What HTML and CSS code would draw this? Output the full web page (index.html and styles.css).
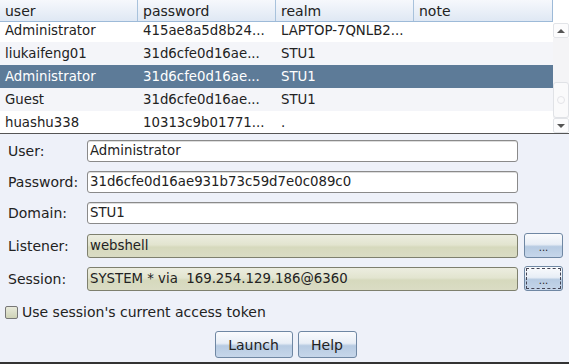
FILE: index.html
```html
<!DOCTYPE html>
<html lang="en">
<head>
  <meta charset="UTF-8" />
  <title>Make Token</title>
  <link rel="stylesheet" href="styles.css">
</head>
<body>
  <div class="table-wrap">
    <div class="table">
      <div class="thead">
        <div class="th">user</div>
        <div class="th">password</div>
        <div class="th">realm</div>
        <div class="th">note</div>
      </div>
      <div class="tbody">
        <div class="rows">
          <div class="tr"><div class="td">Administrator</div><div class="td">415ae8a5d8b24...</div><div class="td">LAPTOP-7QNLB2...</div><div class="td"></div></div>
          <div class="tr alt"><div class="td">liukaifeng01</div><div class="td">31d6cfe0d16ae...</div><div class="td">STU1</div><div class="td"></div></div>
          <div class="tr sel"><div class="td">Administrator</div><div class="td">31d6cfe0d16ae...</div><div class="td">STU1</div><div class="td"></div></div>
          <div class="tr alt"><div class="td">Guest</div><div class="td">31d6cfe0d16ae...</div><div class="td">STU1</div><div class="td"></div></div>
          <div class="tr"><div class="td">huashu338</div><div class="td">10313c9b01771...</div><div class="td">.</div><div class="td"></div></div>
        </div>
      </div>
    </div>
    <div class="scrollbar">
      <div class="sb-btn"><span class="arrow up"></span></div>
      <div class="sb-track"><div class="sb-thumb"><span class="grip"></span></div></div>
      <div class="sb-btn"><span class="arrow down"></span></div>
    </div>
  </div>

  <div class="form">
    <div class="row">
      <label>User:</label>
      <div class="field">Administrator</div>
    </div>
    <div class="row">
      <label>Password:</label>
      <div class="field">31d6cfe0d16ae931b73c59d7e0c089c0</div>
    </div>
    <div class="row">
      <label>Domain:</label>
      <div class="field">STU1</div>
    </div>
    <div class="row tall">
      <label>Listener:</label>
      <div class="field ro">webshell</div>
      <button class="btn dots">...</button>
    </div>
    <div class="row tall">
      <label>Session:</label>
      <div class="field ro">SYSTEM * via&nbsp; 169.254.129.186@6360</div>
      <button class="btn dots focus">...</button>
    </div>
    <div class="check">
      <span class="box"></span>
      <span>Use session's current access token</span>
    </div>
    <div class="actions">
      <button class="btn launch">Launch</button>
      <button class="btn help">Help</button>
    </div>
  </div>
</body>
</html>
```

FILE: styles.css
```css
/* base */
* { margin: 0; padding: 0; box-sizing: border-box; }
body {
  font-family: 'DejaVu Sans', 'Liberation Sans', sans-serif;
  font-size: 13px;
  color: #222;
  background: #eef1f9;
  width: 569px;
  height: 364px;
  overflow: hidden;
  border-bottom: 2px solid #333;
}

/* table */
.table-wrap {
  display: flex;
  height: 134px;
  background: #fff;
  border-bottom: 1px solid #555;
}
.table { width: 553px; }
.thead {
  display: flex;
  height: 22px;
  background: linear-gradient(#f6f8fc, #dfe8f4);
  border-bottom: 1px solid #9dbad8;
  border-right: 1px solid #9dbad8;
}
.th, .td {
  width: 138px;
  padding-left: 5px;
  white-space: nowrap;
  overflow: hidden;
}
.th {
  line-height: 22px;
  font-size: 14px;
  border-right: 1px solid #a8c2dc;
}
.th:last-child { border-right: none; }
.td { font-size: 13.3px; }
.tbody { height: 111px; overflow: hidden; }
.rows { margin-top: -3px; }
.tr { display: flex; height: 23px; line-height: 23px; }
.tr.alt { background: #f4f5f9; }
.tr.sel { background: #5d7b98; color: #fff; }

.scrollbar {
  width: 16px;
  display: flex;
  flex-direction: column;
  padding-top: 23px;
  background: #fff;
}
.sb-btn {
  height: 15px;
  border: 1px solid #e2e4e8;
  border-radius: 2px;
  background: #fcfcfd;
  display: flex;
  align-items: center;
  justify-content: center;
}
.sb-track {
  flex: 1;
  background: #f4f4f6;
  display: flex;
  flex-direction: column;
  justify-content: flex-end;
}
.sb-thumb {
  height: 36px;
  border: 1px solid #e0e2e6;
  border-radius: 3px;
  background: #fafafb;
  display: flex;
  align-items: center;
  justify-content: center;
}
.grip {
  width: 8px;
  height: 8px;
  border: 1px solid #e4e4e8;
  border-radius: 50%;
}
.arrow { width: 0; height: 0; border-left: 4px solid transparent; border-right: 4px solid transparent; }
.arrow.up { border-bottom: 4px solid #555; }
.arrow.down { border-top: 4px solid #555; }

/* form */
.form { padding: 6px 6px 0 8px; }
.row {
  display: flex;
  align-items: center;
  height: 22px;
  margin-bottom: 9px;
}
.row.tall { height: 25px; margin-bottom: 8px; }
.row label { width: 79px; font-size: 14px; }
.field {
  width: 431px;
  height: 22px;
  line-height: 20px;
  padding-left: 2px;
  font-size: 13.3px;
  background: #fff;
  border: 1px solid #8a8a8a;
  border-radius: 3px;
  box-shadow: inset 0 1px 0 #ddd;
  white-space: nowrap;
}
.field.ro {
  height: 24px;
  line-height: 22px;
  background: linear-gradient(#ecede0 0%, #e2e4cf 45%, #d6d9bd 55%, #dadcc4 100%);
  border-color: #7e806e;
  box-shadow: none;
}

.btn {
  font-family: inherit;
  font-size: 13px;
  color: #222;
  border: 1px solid #6f87a3;
  border-radius: 3px;
  background: linear-gradient(#fafbfd 0%, #e8eef6 45%, #b7cbe2 55%, #c6d6ea 100%);
}
.dots {
  width: 39px;
  height: 25px;
  margin-left: 6px;
  font-size: 10px;
  padding-top: 4px;
}
.dots.focus { outline: 1px dashed #445; outline-offset: -3px; }

.check {
  display: flex;
  align-items: center;
  gap: 4px;
  margin: 13px 0 0 -3px;
  height: 16px;
  font-size: 14px;
}
.box {
  width: 13px;
  height: 13px;
  border: 1px solid #777;
  border-radius: 2px;
  background: linear-gradient(#e8eadb, #cfd3b7);
}
.actions {
  display: flex;
  justify-content: center;
  gap: 5px;
  margin-top: 11px;
}
.launch { width: 78px; height: 27px; font-size: 14px; }
.help { width: 59px; height: 27px; font-size: 14px; }
```
